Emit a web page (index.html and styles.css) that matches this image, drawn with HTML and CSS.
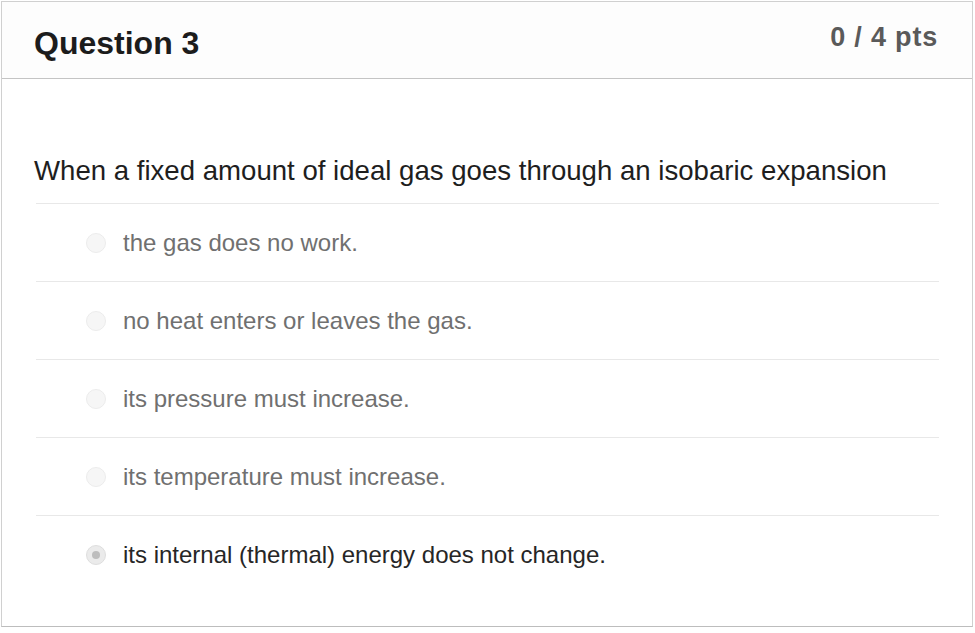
FILE: index.html
```html
<!DOCTYPE html>
<html>
<head>
<meta charset="utf-8">
<link rel="stylesheet" href="styles.css">
</head>
<body>
<div class="quiz">
  <div class="header">
    <h2 class="title">Question 3</h2>
    <div class="pts">0 / 4 pts</div>
  </div>
  <div class="body">
    <p class="qtext">When a fixed amount of ideal gas goes through an isobaric expansion</p>
    <div class="answers">
      <div class="answer"><span class="radio"></span><span class="label">the gas does no work.</span></div>
      <div class="answer"><span class="radio"></span><span class="label">no heat enters or leaves the gas.</span></div>
      <div class="answer"><span class="radio"></span><span class="label">its pressure must increase.</span></div>
      <div class="answer"><span class="radio"></span><span class="label">its temperature must increase.</span></div>
      <div class="answer selected"><span class="radio"></span><span class="label">its internal (thermal) energy does not change.</span></div>
    </div>
  </div>
</div>
</body>
</html>
```
FILE: styles.css
```css
html, body {
  margin: 0;
  padding: 0;
  background: #ffffff;
}
body {
  font-family: "Liberation Sans", Arial, sans-serif;
  padding: 1px 2px 0 1px;
}
.quiz {
  width: 972px;
  height: 626px;
  border: 1px solid #d0d0d0;
  border-bottom-color: #bdbdbd;
  box-sizing: border-box;
  background: #fff;
  display: flex;
  flex-direction: column;
}
.header {
  height: 77px;
  box-sizing: border-box;
  border-bottom: 1px solid #c4c4c4;
  background: #fdfdfd;
  display: flex;
  align-items: center;
  justify-content: space-between;
  padding: 6px 34px 0 32px;
}
.title {
  margin: 0;
  font-size: 32px;
  line-height: 36px;
  font-weight: bold;
  color: #1c1c1c;
}
.pts {
  font-size: 27px;
  line-height: 30px;
  letter-spacing: 0.8px;
  font-weight: bold;
  color: #5a5a5a;
  margin-bottom: 12px;
}
.body {
  flex: 1;
  padding: 0 33px 0 32px;
}
.qtext {
  margin: 0;
  padding-top: 77px;
  height: 124px;
  box-sizing: border-box;
  font-size: 27.6px;
  line-height: 30px;
  color: #1e1e1e;
}
.answers {
  padding: 0 0 0 2px;
}
.answer {
  height: 78px;
  border-top: 1px solid #e8e8e8;
  box-sizing: border-box;
  display: flex;
  align-items: center;
  padding-left: 50px;
}
.radio {
  width: 20px;
  height: 20px;
  border-radius: 50%;
  border: 1px solid #ececec;
  background: #f6f6f6;
  box-sizing: border-box;
  margin-right: 17px;
  position: relative;
  flex: none;
}
.label {
  font-size: 24px;
  color: #707070;
}
.selected .label {
  color: #262626;
}
.selected .radio {
  background: #ebebeb;
  border-color: #dedede;
}
.selected .radio::after {
  content: "";
  position: absolute;
  left: 5px;
  top: 5px;
  width: 8px;
  height: 8px;
  border-radius: 50%;
  background: #bdbdbd;
}
```
